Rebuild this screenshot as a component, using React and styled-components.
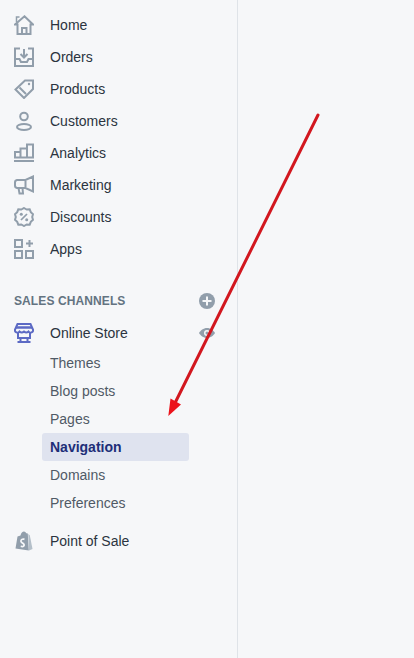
import React from "react";
import styled, { createGlobalStyle } from "styled-components";

const Global = createGlobalStyle`
  html, body { margin: 0; padding: 0; height: 100%; background: #f6f7f9; }
  body { font-family: "Liberation Sans", Arial, sans-serif; overflow: hidden; }
`;
const Page = styled.div`position: relative; width: 414px; height: 658px; background: #f6f7f9; overflow: hidden;`;
const Sidebar = styled.nav`
  box-sizing: border-box; width: 238px; height: 658px; padding-top: 9px;
  border-right: 1px solid #dfe3e8; display: flex; flex-direction: column;
`;
const Row = styled.div`
  display: flex; align-items: center; height: 32px; padding: 0 22px 0 14px;
  font-size: 14px; color: #2b3440;
`;
const IconSlot = styled.span`
  width: 20px; height: 20px; margin-right: 16px; flex: none; display: flex; align-items: center; justify-content: center;
  svg { display: block; }
`;
const Label = styled.span`flex: 1;`;
const SectionHead = styled.div`
  display: flex; align-items: center; justify-content: space-between; height: 32px;
  margin-top: 20px; padding: 0 22px 0 14px;
  font-size: 12px; font-weight: 700; color: #637381; letter-spacing: 0.1px;
`;
const SubList = styled.div`display: flex; flex-direction: column; padding: 0 48px 0 42px; margin-bottom: 8px;`;
const SubItem = styled.div`
  box-sizing: border-box; height: 28px; padding-left: 8px; display: flex; align-items: center; border-radius: 3px;
  font-size: 14px; color: ${p => (p.$active ? "#202e78" : "#505a66")};
  font-weight: ${p => (p.$active ? 700 : 400)};
  background: ${p => (p.$active ? "#dfe3ef" : "transparent")};
`;
const ArrowLayer = styled.svg`position: absolute; left: 0; top: 0; pointer-events: none;`;

const G = "#919eab";
const S = { fill: "none", stroke: G, strokeWidth: 2 };
const Svg = ({ children }) => <svg width="20" height="20" viewBox="0 0 20 20">{children}</svg>;

const Home = () => <Svg><path {...S} d="M1 9.500 10.500 1.300 19 9.500h-2.500V19H3.500V9.500zM8 19v-6h4.500v6" /><path {...S} strokeWidth="1.500" d="M2.500 7V2h3" /></Svg>;
const Orders = () => <Svg><path {...S} d="M6 1.500H1V19h18V1.500h-5M1 12h4.500l1.500 3h6l1.500-3H19M10 2v8M6.500 7l3.500 3.500L13.500 7" /></Svg>;
const Products = () => <Svg><path {...S} d="M1.500 10.500 11 1.500h8V10l-9 9zM5.500 8.500l6.500 6.500" /><circle cx="15" cy="5" r="1.200" fill={G} /></Svg>;
const Customers = () => <Svg><circle {...S} cx="10" cy="5.500" r="3.800" /><ellipse {...S} cx="10" cy="16" rx="7" ry="3" /></Svg>;
const Analytics = () => <Svg><path {...S} d="M1 14.500V9h5.500v5.500zM6.500 14.500V5.500H13v9zM13 14.500V1.500h6v13z" /><path {...S} d="M0 18h20" /></Svg>;
const Marketing = () => <Svg><path {...S} d="M19 1.500v15L11.500 13H3A2.500 2.500 0 0 1 1 10.500V7.500A2.500 2.500 0 0 1 3 5h8.500zM11.500 5v8M4.500 13l1 5.500h3.500L8.500 13" /></Svg>;
const Discounts = () => <Svg><path {...S} d="M10 1l2.700 1.500 3-.2 1.100 2.900 2.200 2-.8 2.800.8 2.800-2.200 2-1.100 2.900-3-.2L10 19l-2.700-1.500-3 .2-1.100-2.900-2.200-2 .8-2.800-.8-2.800 2.200-2 1.100-2.900 3 .2z" /><path {...S} strokeWidth="1.700" d="M7 13l6-6" /><circle cx="7.300" cy="7.300" r="1.500" fill={G} /><circle cx="12.700" cy="12.700" r="1.500" fill={G} /></Svg>;
const Apps = () => <Svg><path {...S} d="M1 1h7v7H1zM1 12h7v7H1zM12 12h7v7h-7zM15.500 1v7M12 4.500h7" /></Svg>;
const Store = () => <Svg><g fill="none" stroke="#5c6ac4" strokeWidth="2"><path d="M3.500 1h13L19 6.500a2.500 2.500 0 0 1-4.500 2 3.500 3.500 0 0 1-4.500 0 3.500 3.500 0 0 1-4.500 0A2.500 2.500 0 0 1 1 6.500z" /><path strokeWidth="2.500" d="M2 4.500h16" /><path d="M4 9v6h12V9M6.500 15v4M13.500 15v4M3.500 19h13" /></g></Svg>;
const Bag = () => <Svg><path fill={G} d="M1.500 17.500 3.500 5.500 6.500 4.500C7 2 8.500.5 10 .5c1 0 1.700.8 2.200 1.700l1 .1c.3 0 .5.200.6.500L14.800 19.500z" /><path fill="#b4bfc9" d="M14.300 3l1.500 1.300 2.700 13.700-3.500 1.500z" /><path fill="#f6f7f9" d="M10.700 7.400 10.200 9.300C9 8.800 7.800 9.200 7.800 10c0 1.200 3.200 1.500 3.200 4 0 2-2.300 3.100-4.500 2l.5-1.800c1 .8 2.200.8 2.200-.1 0-1.200-3.100-1.400-3.100-4 0-2.300 2.500-3.500 4.600-2.700z" /></Svg>;
const Plus = () => <svg width="16" height="16" viewBox="0 0 16 16"><circle cx="8" cy="8" r="8" fill={G} /><path d="M8 3.500v9M3.500 8h9" stroke="#f6f7f9" strokeWidth="2" /></svg>;
const Eye = () => <svg width="16" height="10" viewBox="0 0 16 10"><path fill={G} d="M8 0c3.600 0 6.500 2.500 8 5-1.500 2.500-4.400 5-8 5S1.500 7.500 0 5c1.500-2.500 4.400-5 8-5z" /><circle cx="8" cy="5" r="3" fill="#f6f7f9" /><circle cx="8" cy="5" r="1.500" fill={G} /></svg>;

const items = [
  ["Home", Home], ["Orders", Orders], ["Products", Products], ["Customers", Customers],
  ["Analytics", Analytics], ["Marketing", Marketing], ["Discounts", Discounts], ["Apps", Apps],
];
const subs = ["Themes", "Blog posts", "Pages", "Navigation", "Domains", "Preferences"];

export default function App() {
  return (
    <Page>
      <Global />
      <Sidebar>
        {items.map(([name, I]) => (
          <Row key={name}><IconSlot><I /></IconSlot><Label>{name}</Label></Row>
        ))}
        <SectionHead>SALES CHANNELS<Plus /></SectionHead>
        <Row><IconSlot><Store /></IconSlot><Label>Online Store</Label><Eye /></Row>
        <SubList>
          {subs.map(s => <SubItem key={s} $active={s === "Navigation"}>{s}</SubItem>)}
        </SubList>
        <Row><IconSlot><Bag /></IconSlot><Label>Point of Sale</Label></Row>
      </Sidebar>
      <ArrowLayer width="414" height="658" viewBox="0 0 414 658">
        <path d="M318 115 175 403" stroke="#d2171f" strokeWidth="3" strokeLinecap="round" fill="none" />
        <path d="M168.300 416 170.500 398.500 181 404.500z" fill="#ec131b" />
      </ArrowLayer>
    </Page>
  );
}
